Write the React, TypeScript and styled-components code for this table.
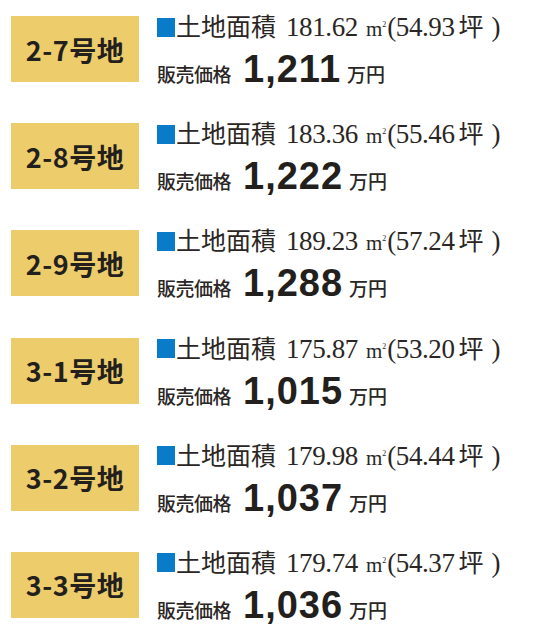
import styled, { createGlobalStyle } from "styled-components";

const GlobalStyle = createGlobalStyle`
  body {
    margin: 0;
    background: #ffffff;
  }
`;

type Lot = {
  no: string;
  area: string;
  tsubo: string;
  price: string;
};

const lots: Lot[] = [
  { no: "2-7", area: "181.62", tsubo: "54.93", price: "1,211" },
  { no: "2-8", area: "183.36", tsubo: "55.46", price: "1,222" },
  { no: "2-9", area: "189.23", tsubo: "57.24", price: "1,288" },
  { no: "3-1", area: "175.87", tsubo: "53.20", price: "1,015" },
  { no: "3-2", area: "179.98", tsubo: "54.44", price: "1,037" },
  { no: "3-3", area: "179.74", tsubo: "54.37", price: "1,036" },
];

const App = () => {
  return (
    <>
      <GlobalStyle />
      <List>
        {lots.map((lot) => (
          <Row key={lot.no}>
            <LotLabel>{lot.no}号地</LotLabel>
            <Info>
              <AreaLine>
                <BlueMark />
                <Kanji>土地面積</Kanji>
                <Num $gap={10}>{lot.area}</Num>
                <Sqm>
                  m<sup>2</sup>
                </Sqm>
                <Num>({lot.tsubo}</Num>
                <Kanji $gap={4}>坪</Kanji>
                <Num $gap={8}>)</Num>
              </AreaLine>
              <PriceLine>
                <PriceCaption>販売価格</PriceCaption>
                <Price>{lot.price}</Price>
                <Unit>万円</Unit>
              </PriceLine>
            </Info>
          </Row>
        ))}
      </List>
    </>
  );
};

const List = styled.div`
  display: flex;
  flex-direction: column;
  gap: 41.2px;
  padding: 16px 0 24px 11px;
`;

const Row = styled.div`
  display: flex;
  align-items: flex-start;
  gap: 18px;
  height: 66px;
`;

const LotLabel = styled.div`
  width: 128px;
  height: 66px;
  flex-shrink: 0;
  display: flex;
  align-items: center;
  justify-content: center;
  background: #edcc6c;
  color: #231f1c;
  font-family: "Noto Sans CJK JP", sans-serif;
  font-weight: 700;
  font-size: 27px;
  letter-spacing: 0.5px;
`;

const Info = styled.div`
  display: flex;
  flex-direction: column;
  gap: 11px;
  margin-top: -5px;
  color: #2a2624;
`;

const AreaLine = styled.div`
  display: flex;
  align-items: baseline;
  height: 28px;
  white-space: nowrap;
`;

const BlueMark = styled.span`
  display: inline-block;
  width: 18px;
  height: 19px;
  background: #0a7bc9;
  align-self: center;
  margin: 4px 1px 0 0;
`;

const Kanji = styled.span<{ $gap?: number }>`
  font-family: "Noto Sans CJK JP", sans-serif;
  font-weight: 400;
  font-size: 25px;
  line-height: 28px;
  margin-left: ${(p) => p.$gap ?? 0}px;
`;

const Num = styled.span<{ $gap?: number }>`
  font-family: "Liberation Serif", serif;
  font-size: 27px;
  line-height: 28px;
  letter-spacing: -0.4px;
  margin-left: ${(p) => p.$gap ?? 0}px;
`;

const Sqm = styled.span`
  font-family: "Liberation Serif", serif;
  font-size: 21px;
  line-height: 28px;
  margin: 0 1px 0 8px;
  sup {
    font-size: 8px;
    vertical-align: 9px;
  }
`;

const PriceLine = styled.div`
  display: flex;
  align-items: baseline;
  white-space: nowrap;
`;

const PriceCaption = styled.span`
  font-family: "Noto Sans CJK JP", sans-serif;
  font-weight: 500;
  font-size: 19px;
  letter-spacing: -0.5px;
`;

const Price = styled.span`
  font-family: "Liberation Sans", "Noto Sans", sans-serif;
  font-weight: 700;
  font-size: 38px;
  line-height: 38px;
  letter-spacing: 1px;
  margin: 0 6px 0 12px;
  color: #231f1c;
`;

const Unit = styled.span`
  font-family: "Noto Sans CJK JP", sans-serif;
  font-weight: 500;
  font-size: 19px;
`;

export default App;
